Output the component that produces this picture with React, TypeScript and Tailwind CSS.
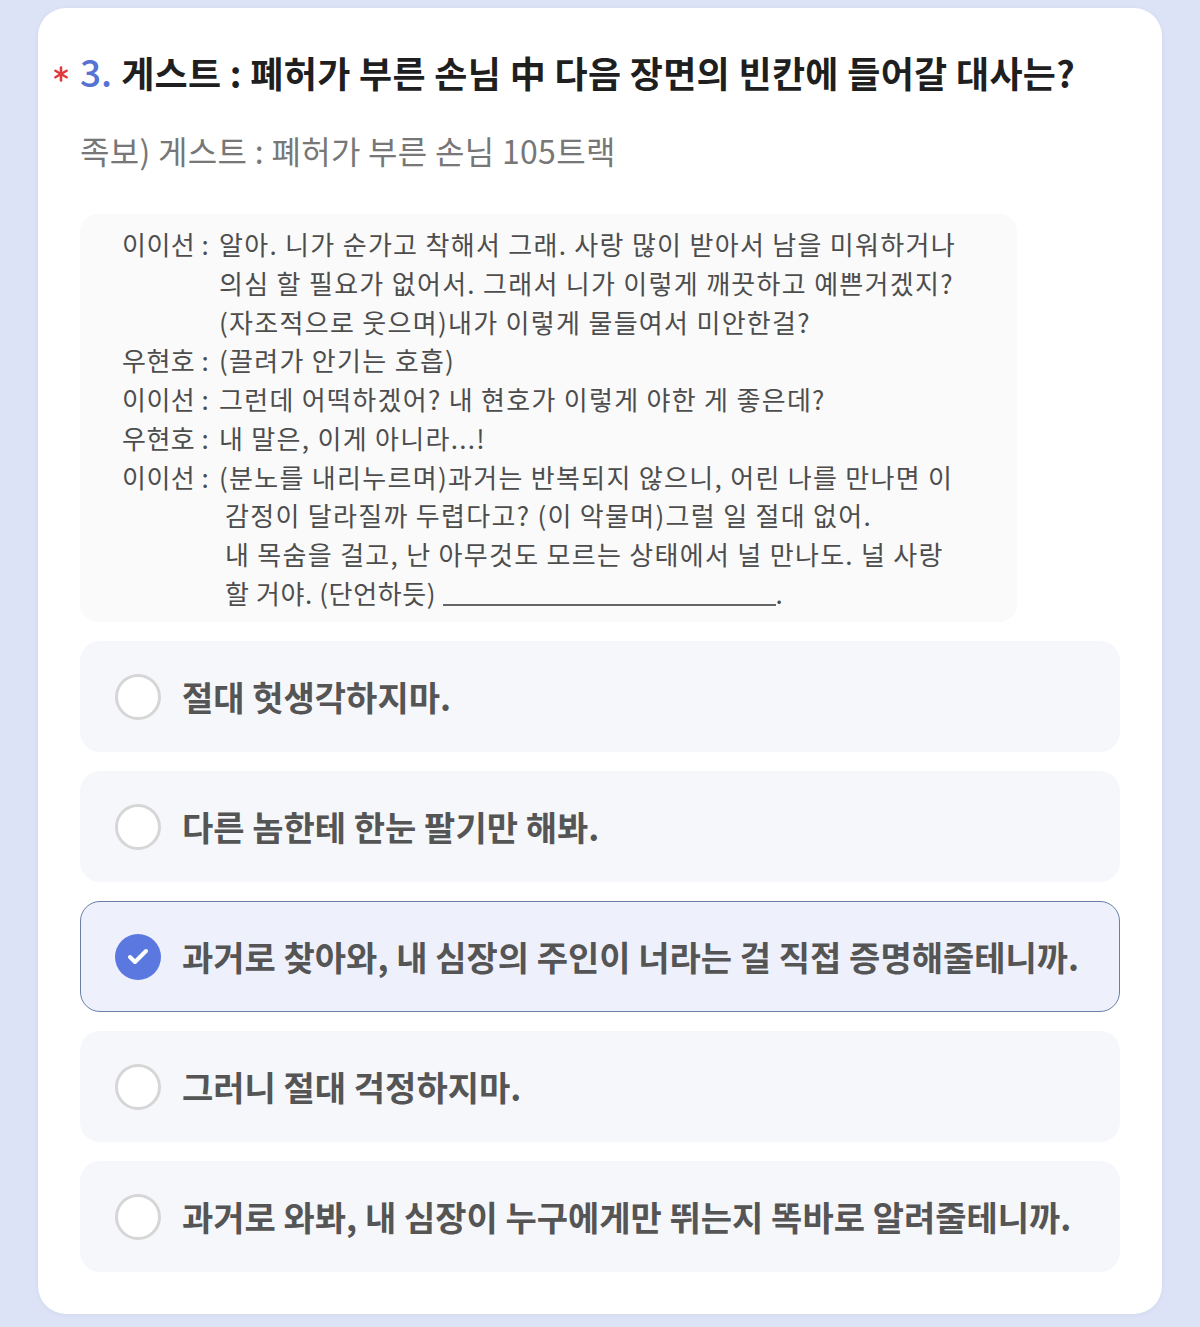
import { Check } from "lucide-react";

const options = [
  { id: 1, text: "절대 헛생각하지마." },
  { id: 2, text: "다른 놈한테 한눈 팔기만 해봐." },
  { id: 3, text: "과거로 찾아와, 내 심장의 주인이 너라는 걸 직접 증명해줄테니까." },
  { id: 4, text: "그러니 절대 걱정하지마." },
  { id: 5, text: "과거로 와봐, 내 심장이 누구에게만 뛰는지 똑바로 알려줄테니까." },
];

const selectedId = 3;

const ScriptLine = ({ label, children }: { label?: string; children: React.ReactNode }) => (
  <div className="flex h-[38.8px] items-center whitespace-nowrap">
    <span className="w-[97px] shrink-0 tracking-[0.5px]">{label ? `${label} :` : ""}</span>
    <span>{children}</span>
  </div>
);

const ScriptBox = () => (
  <div className="mt-[44px] h-[408px] w-[937px] rounded-[18px] bg-[#fafafa] pl-[42px] pt-[10px] text-[26px] tracking-[1.3px] text-[#4d4d4d]">
    <ScriptLine label="이이선">알아. 니가 순가고 착해서 그래. 사랑 많이 받아서 남을 미워하거나</ScriptLine>
    <ScriptLine>의심 할 필요가 없어서. 그래서 니가 이렇게 깨끗하고 예쁜거겠지?</ScriptLine>
    <ScriptLine>(자조적으로 웃으며)내가 이렇게 물들여서 미안한걸?</ScriptLine>
    <ScriptLine label="우현호">(끌려가 안기는 호흡)</ScriptLine>
    <ScriptLine label="이이선">그런데 어떡하겠어? 내 현호가 이렇게 야한 게 좋은데?</ScriptLine>
    <ScriptLine label="우현호">내 말은, 이게 아니라...!</ScriptLine>
    <ScriptLine label="이이선">(분노를 내리누르며)과거는 반복되지 않으니, 어린 나를 만나면 이</ScriptLine>
    <ScriptLine>
      <span className="pl-[6px]">감정이 달라질까 두렵다고? (이 악물며)그럴 일 절대 없어.</span>
    </ScriptLine>
    <ScriptLine>
      <span className="pl-[6px]">내 목숨을 걸고, 난 아무것도 모르는 상태에서 널 만나도. 널 사랑</span>
    </ScriptLine>
    <ScriptLine>
      <span className="pl-[6px] tracking-[0.6px]">
        할 거야. (단언하듯){" "}
        <span className="inline-block w-[333px] border-b-2 border-[#666] align-[-2px]" />.
      </span>
    </ScriptLine>
  </div>
);

const Option = ({ text, selected }: { text: string; selected: boolean }) => (
  <div
    className={
      selected
        ? "flex h-[111px] items-center gap-[21px] rounded-[20px] border-[1.5px] border-[#6b7fa6] bg-[#eef1fc] pl-[34px]"
        : "flex h-[111px] items-center gap-[21px] rounded-[20px] bg-[#f6f7fb] pl-[35px]"
    }
  >
    {selected ? (
      <span className="flex h-[46px] w-[46px] shrink-0 items-center justify-center rounded-full bg-[#5a78e0]">
        <Check className="h-[24px] w-[24px] text-white" strokeWidth={4} />
      </span>
    ) : (
      <span className="h-[46px] w-[46px] shrink-0 rounded-full border-[3px] border-[#d6d6d6] bg-white" />
    )}
    <span className="whitespace-nowrap text-[34px] font-semibold text-[#555]">{text}</span>
  </div>
);

const RequiredMark = () => (
  <svg viewBox="0 0 16 16" className="-ml-[27px] mr-[11px] mt-[4px] h-[16px] w-[16px] shrink-0">
    <g stroke="#e0393e" strokeWidth="2.6" strokeLinecap="round">
      <line x1="8" y1="1.5" x2="8" y2="14.5" />
      <line x1="2.4" y1="4.75" x2="13.6" y2="11.25" />
      <line x1="2.4" y1="11.25" x2="13.6" y2="4.75" />
    </g>
  </svg>
);

export default function App() {
  return (
    <div
      className="min-h-[1327px] bg-[#dde3f6] px-[38px] pt-[8px] pb-[13px]"
      style={{ fontFamily: '"Noto Sans CJK KR", "Noto Sans", sans-serif' }}
    >
      <div className="h-[1306px] rounded-[28px] bg-white px-[42px] pt-[42px] shadow-[0_1px_4px_rgba(80,90,140,0.08)]">
        <div className="flex h-[44px] items-center whitespace-nowrap">
          <RequiredMark />
          <span className="text-[37px] font-medium text-[#5673d4]">3.</span>
          <span className="ml-[9px] text-[36px] font-bold tracking-[0.3px] text-[#1f1f1f]">
            게스트 : 폐허가 부른 손님 中 다음 장면의 빈칸에 들어갈 대사는?
          </span>
        </div>
        <div className="mt-[36px] h-[40px] whitespace-nowrap text-[32px] leading-[40px] tracking-[0.3px] text-[#777]">
          족보) 게스트 : 폐허가 부른 손님 105트랙
        </div>
        <ScriptBox />
        <div className="mt-[19px] flex flex-col gap-[19px]">
          {options.map((o) => (
            <Option key={o.id} text={o.text} selected={o.id === selectedId} />
          ))}
        </div>
      </div>
    </div>
  );
}
